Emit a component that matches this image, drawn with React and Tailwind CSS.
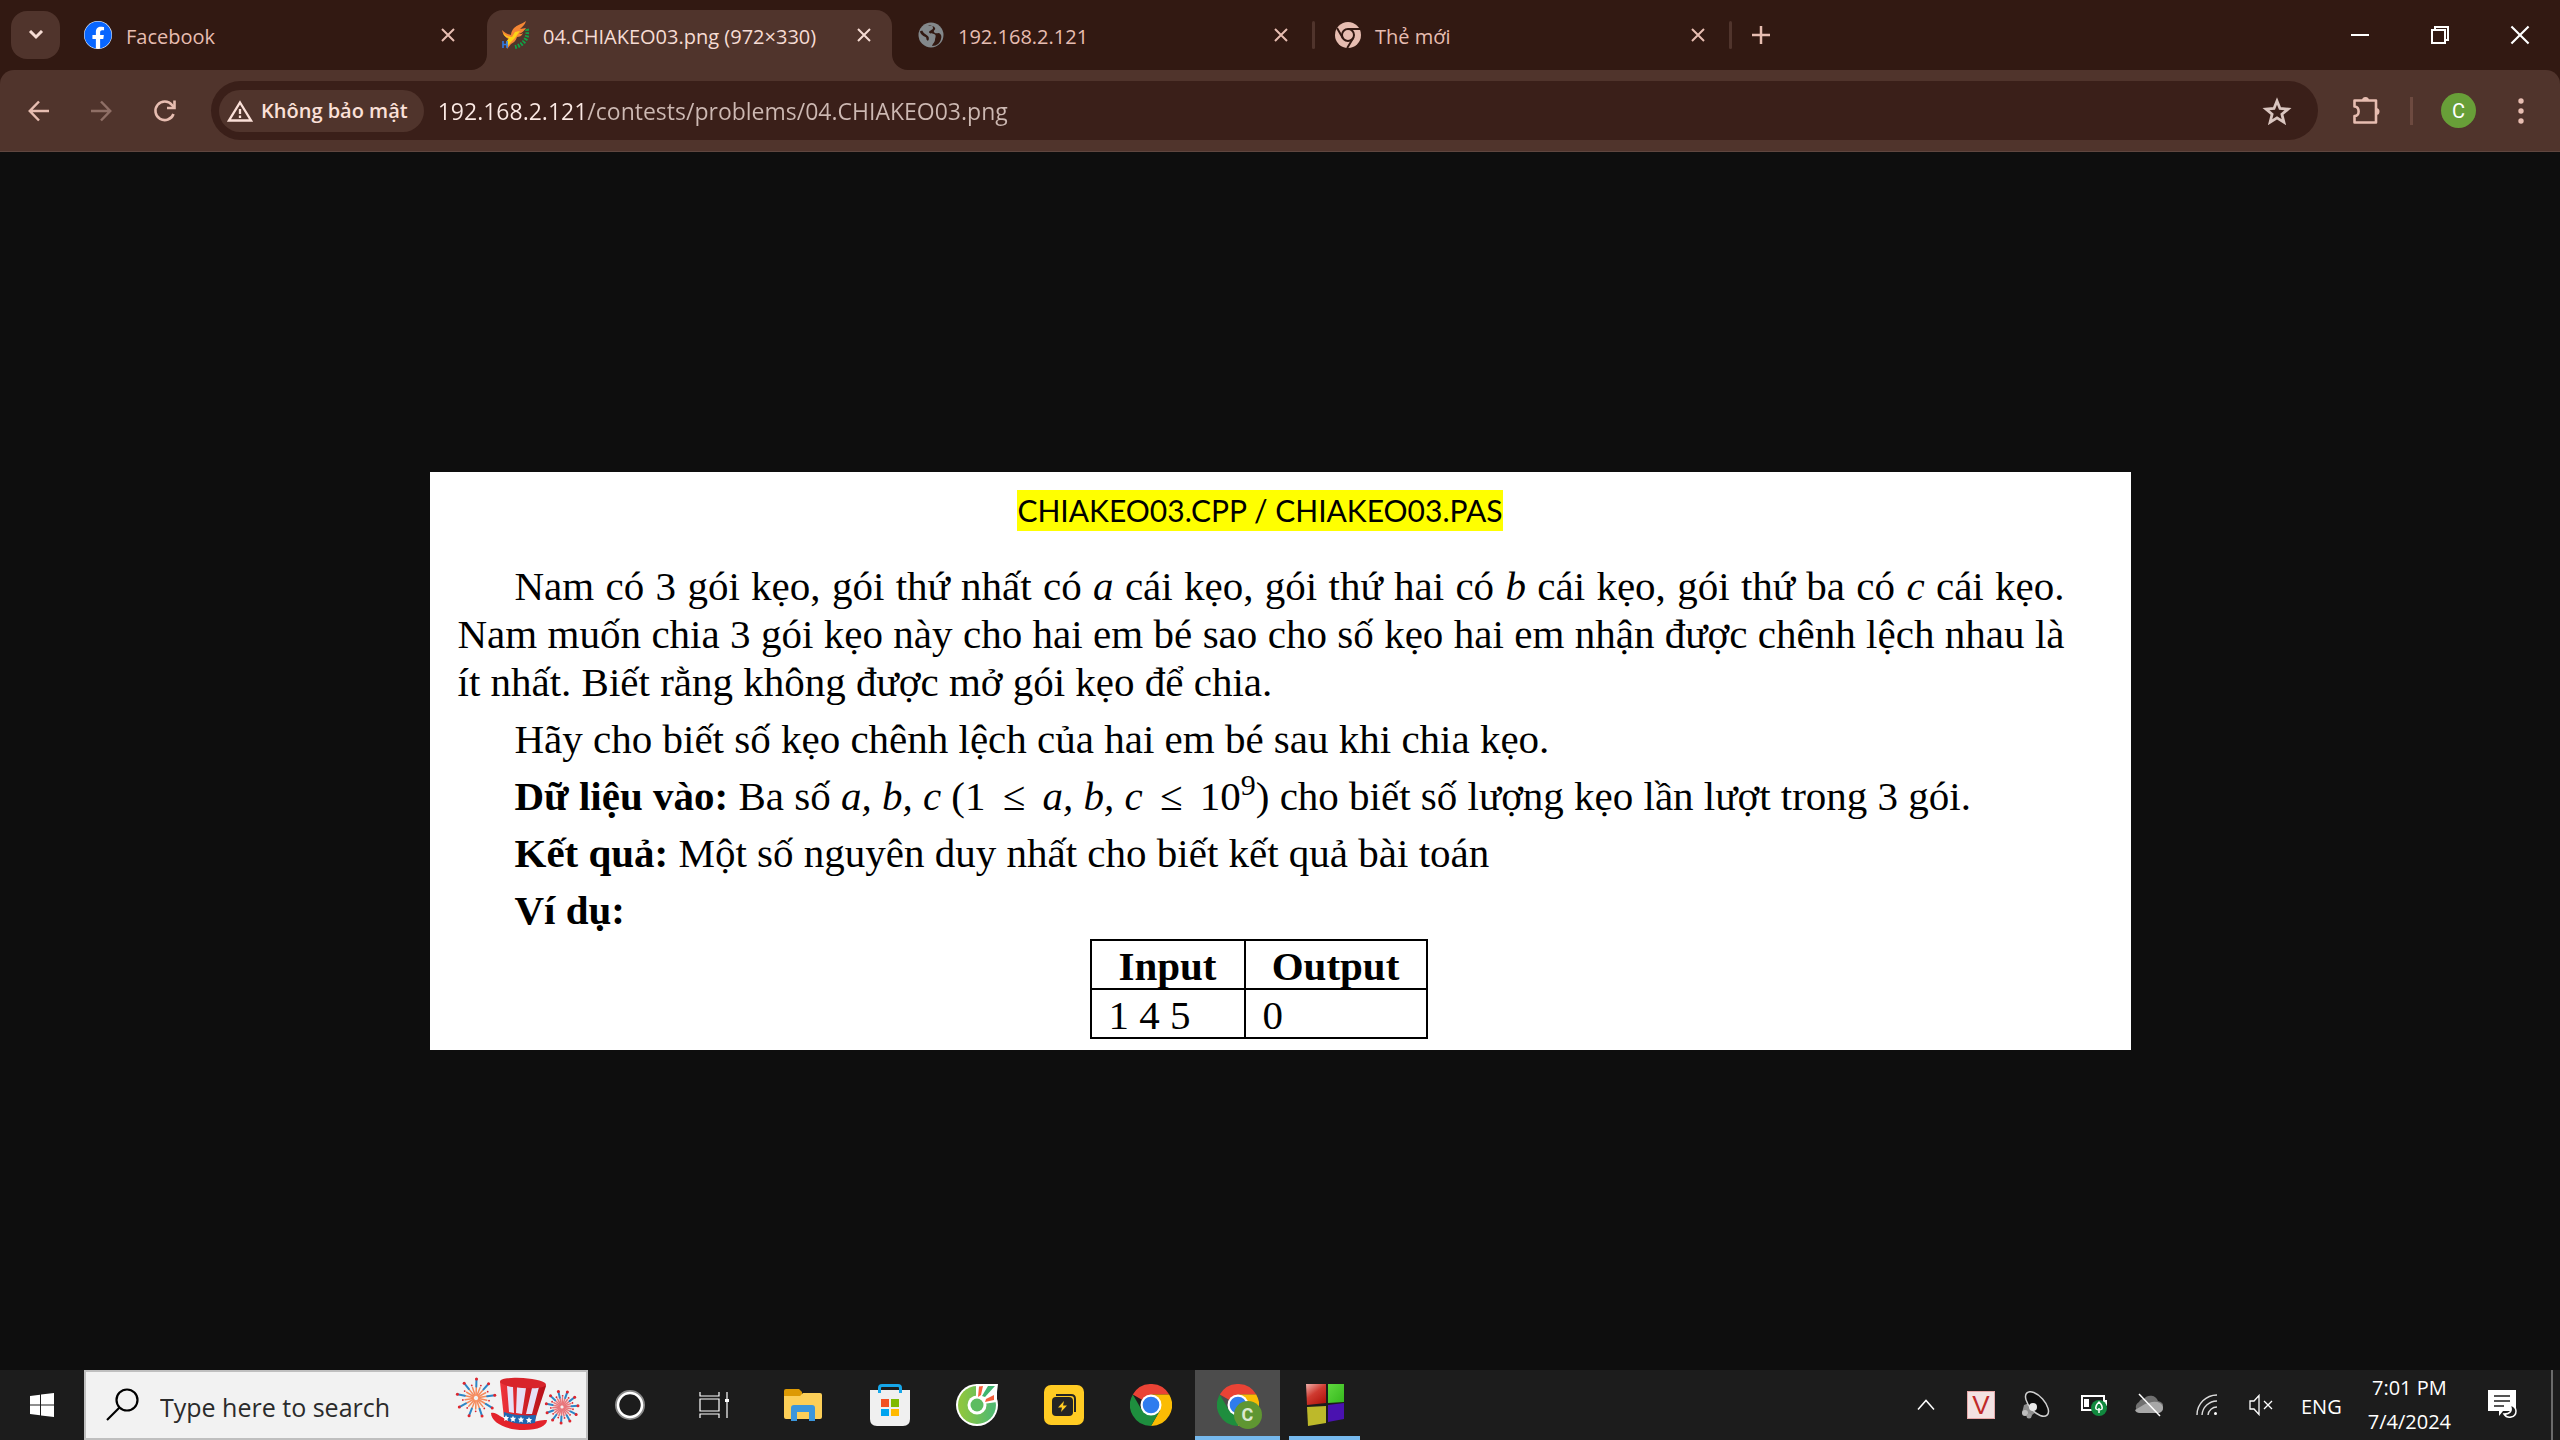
import React from 'react';
import { FaFacebook } from 'react-icons/fa';

const seg = "font-['Open_Sans','Noto_Sans',sans-serif]";

function Cross({ s = 14, w = 2 }) {
  return (
    <svg width={s} height={s} viewBox="0 0 14 14" fill="none" stroke="currentColor" strokeWidth={w}>
      <path d="M1 1l12 12M13 1L1 13" />
    </svg>
  );
}

function Phoenix() {
  return (
    <svg width="28" height="28" viewBox="0 0 28 28">
      <path d="M25 0c-1 4-4 6-6 8l6-1c-2 3-4 5-7 6 2 0 3 0 4-1-1 3-4 4-6 4-1 4-4 6-6 7l-4 5-1-6 3-4C5 17 2 14 1 9c3 3 5 4 9 5 0-2 1-5 3-7 3-3 8-4 12-7z" fill="#f58634" />
      <path d="M2 12c3 3 6 4 9 4l3-5 5-1-5 7-5 5-3 4-1-5 3-4c-3-1-5-2-6-5z" fill="#fcd317" />
      <path d="M26 8c2 8-3 16-12 18" fill="none" stroke="#12a046" strokeWidth="4" strokeDasharray="1.800 1.400" />
      <path d="M2 20v7M6 20v7M2 23.500h4" stroke="#2f7be8" strokeWidth="1.600" />
    </svg>
  );
}

function GlobeIcon() {
  return (
    <svg width="26" height="26" viewBox="0 0 26 26">
      <circle cx="13" cy="13" r="12.500" fill="#83888b" />
      <path d="M10 4c3-1 5 0 5 2s-3 2-4 4c0 2 3 1 5 2 3 1 1 4 1 6s-2 3-3 6c5 0 8-3 9-7 1-3 0-5-2-6-2 0-4 1-5-1s2-2 1-4-3-2-5-2z" fill="#321912" />
      <path d="M3 9c1 3 3 4 5 5s2 3 1 4" fill="none" stroke="#321912" strokeWidth="2.500" />
    </svg>
  );
}

function ChromeMono() {
  return (
    <svg width="26" height="26" viewBox="0 0 26 26">
      <circle cx="13" cy="13" r="13" fill="#e7bdb1" />
      <circle cx="13" cy="13" r="6" fill="none" stroke="#321912" strokeWidth="2" />
      <path d="M13 7h12M7.800 16L2 6M18.200 16l-6 10" stroke="#321912" strokeWidth="2" />
    </svg>
  );
}

function Chrome() {
  return (
    <svg width="42" height="42" viewBox="0 0 48 48">
      <path d="M24 24L3.200 12A24 24 0 0 1 44.800 12H24z" fill="#ea4335" />
      <path d="M24 12h20.800A24 24 0 0 1 24 48l10.400-18z" fill="#fbbc04" />
      <path d="M3.200 12A24 24 0 0 0 24 48l10.400-18H13.600z" fill="#1e8e3e" />
      <circle cx="24" cy="24" r="12" fill="#fff" />
      <circle cx="24" cy="24" r="9.500" fill="#2f7cee" />
    </svg>
  );
}

function Burst({ cx, cy, r, n, a = '#f58a5c', b = '#2c86c7' }) {
  const items = [];
  for (let i = 0; i < n; i++) {
    const t = (i * 2 * Math.PI) / n + 0.2;
    const c = Math.cos(t);
    const s = Math.sin(t);
    const l = i % 2 ? r : r * 0.7;
    items.push(
      <g key={i}>
        <path d={`M${cx + c * r * 0.15} ${cy + s * r * 0.15}L${cx + c * r * 0.58} ${cy + s * r * 0.58}`} stroke={a} strokeWidth="1.500" />
        {i % 2 === 1 && <path d={`M${cx + c * r * 0.6} ${cy + s * r * 0.6}L${cx + c * l} ${cy + s * l}`} stroke={b} strokeWidth="2" />}
        <circle cx={cx + c * l} cy={cy + s * l} r={i % 2 ? 1.5 : 0.9} fill="#e0252d" />
      </g>
    );
  }
  return <g strokeLinecap="round">{items}</g>;
}

function HatArt() {
  return (
    <svg width="126" height="64" viewBox="0 0 126 64">
      <defs>
        <linearGradient id="hat" x1="0" x2="1">
          <stop offset="0" stopColor="#f0343b" />
          <stop offset="1" stopColor="#b51018" />
        </linearGradient>
      </defs>
      <Burst cx={21} cy={25} r={19} n={18} />
      <Burst cx={107} cy={34} r={16} n={22} a="#e8777c" />
      <path d="M36 40c0 9 14 17 33 17 14 0 23-4 23-10-3 0-6 0-9 1-11 3-28 1-38-5-3-2-6-4-9-3z" fill="#e3232b" />
      <path d="M45 9c0-4 46-2 46 4L80 47c-8 4-24 2-31-2z" fill="url(#hat)" />
      <path d="M52 13l6 1 1 26-5-1zM62 14l9 1-4 26-6-1zM77 15l7-1-7 27h-6z" fill="#e6e0f6" />
      <ellipse cx="68" cy="10" rx="23" ry="5" transform="rotate(4 68 10)" fill="#d8242b" />
      <path d="M49 39c9 3 20 4 32 3l-1 8c-10 2-23 1-31-4z" fill="#1f67b1" />
      {[51, 58, 66, 74].map((x, i) => (
        <path key={x} d={`M${x} ${42 + i * 0.7}l1 2h2l-1.500 2 .5 2-2-1-2 1 .5-2-1.500-2h2z`} fill="#fff" />
      ))}
    </svg>
  );
}

function Tab({ icon, title, active, width, sep }) {
  return (
    <div className={`${width} relative flex items-center ${active ? 'h-[60px] self-end rounded-t-[16px] bg-[#50342c] pb-[10px] text-[#f6dcd4]' : 'h-[70px] text-[#e7bdb1]'}`}>
      {active && (
        <>
          <svg className="absolute bottom-0 -left-4" width="16" height="16"><path d="M16 0v16H0A16 16 0 0 0 16 0z" fill="#50342c" /></svg>
          <svg className="absolute -right-4 bottom-0" width="16" height="16"><path d="M0 0v16h16A16 16 0 0 1 0 0z" fill="#50342c" /></svg>
        </>
      )}
      <a href="#tab" className="flex min-w-0 flex-1 items-center gap-[14px] pl-[14px] text-[20px] leading-7 whitespace-nowrap">
        {icon}
        <span className="pt-[3px]">{title}</span>
      </a>
      <button aria-label="Close tab" className={sep ? 'mr-6' : 'mr-[21px]'}><Cross /></button>
      {sep && <span className="h-7 w-[3px] rounded bg-[#50342c]" />}
    </div>
  );
}

const V = ({ children }) => <i className="font-['Liberation_Serif',serif]">{children}</i>;
const Leq = () => <span className="mx-[7px]">≤</span>;

function Task({ children, active, running, label }) {
  return (
    <button aria-label={label} className="relative flex h-[70px] w-[87px] items-center justify-center">
      {active && <span className="absolute inset-x-px inset-y-0 border-b-4 border-[#76b9ed] bg-[#4c4c4c]" />}
      {running && <span className="absolute inset-x-2 bottom-0 h-1 bg-[#76b9ed]" />}
      <span className="relative">{children}</span>
    </button>
  );
}

export default function App() {
  return (
    <div className={`flex min-h-screen flex-col bg-[#0e0e0e] ${seg}`}>
      <header className="bg-[#321912]">
        <div className="flex h-[70px] items-center">
          <button aria-label="Search tabs" className="ml-[11px] flex h-12 w-[49px] items-center justify-center rounded-[16px] bg-[#50342c] text-[#f6dcd4]">
            <svg width="16" height="10" viewBox="0 0 16 10" fill="none" stroke="currentColor" strokeWidth="3"><path d="M2 1l6 6 6-6" /></svg>
          </button>
          <Tab width="ml-[10px] w-[406px]" title="Facebook" icon={<span className="rounded-full bg-white"><FaFacebook size={28} color="#0866ff" /></span>} />
          <Tab width="ml-[11px] w-[405px]" active title="04.CHIAKEO03.png (972×330)" icon={<Phoenix />} />
          <Tab width="ml-[12px] w-[411px]" sep title="192.168.2.121" icon={<GlobeIcon />} />
          <Tab width="ml-[6px] w-[411px]" sep title="Thẻ mới" icon={<ChromeMono />} />
          <button aria-label="New tab" className="ml-5 text-[#e7bdb1]">
            <svg width="18" height="18" viewBox="0 0 18 18" stroke="currentColor" strokeWidth="2.500"><path d="M9 0v18M0 9h18" /></svg>
          </button>
          <div className="ml-auto flex text-white">
            <button aria-label="Minimize" className="flex h-[70px] w-20 items-center justify-center"><span className="h-[2px] w-[18px] bg-white" /></button>
            <button aria-label="Restore" className="flex h-[70px] w-20 items-center justify-center">
              <svg width="18" height="18" viewBox="0 0 18 18" fill="none" stroke="currentColor" strokeWidth="2"><path d="M1 4h13v13H1zM4 4V1h13v13h-3" /></svg>
            </button>
            <button aria-label="Close" className="flex h-[70px] w-20 items-center justify-center"><Cross s={20} w={1.5} /></button>
          </div>
        </div>
        <div className="flex h-[82px] items-center rounded-t-[14px] border-b border-[#5f463f] bg-[#50342c] pr-[36px] pl-[28px] text-[#e7bdb1]">
          <button aria-label="Back">
            <svg width="22" height="22" viewBox="0 0 22 22" fill="none" stroke="currentColor" strokeWidth="2.500"><path d="M21 11H2M11 1.500L1.800 11l9.200 9.500" /></svg>
          </button>
          <button aria-label="Forward" className="ml-10 text-[#8f6f66]">
            <svg width="22" height="22" viewBox="0 0 22 22" fill="none" stroke="currentColor" strokeWidth="2.500"><path d="M1 11h19M11 1.500l9.200 9.500-9.200 9.500" /></svg>
          </button>
          <button aria-label="Reload" className="ml-10">
            <svg width="24" height="24" viewBox="0 0 24 24" fill="none" stroke="currentColor" strokeWidth="2.600"><path d="M21.500 15A9.300 9.300 0 1 1 20 6l2 2.500" /><path d="M22.500 1.500v7.500H15" /></svg>
          </button>
          <div className="ml-[35px] flex h-[59px] flex-1 items-center rounded-full bg-[#3a1f19] pr-[26px] pl-2">
            <button className="flex h-[42px] shrink-0 items-center gap-2 rounded-full bg-[#50342c] px-2 pr-4 text-[20px] leading-7 font-semibold text-[#fbe0d8]">
              <svg width="26" height="22" viewBox="0 0 26 22" fill="none" stroke="currentColor" strokeWidth="2.300"><path d="M13 2.500L24 20.500H2z" /><path d="M13 9v5M13 15.500V18" /></svg>
              Không bảo mật
            </button>
            <input
              aria-label="Address"
              defaultValue="192.168.2.121/contests/problems/04.CHIAKEO03.png"
              className="ml-[14px] min-w-0 flex-1 bg-linear-to-r from-[#fbe9e4] from-[147px] to-[#cdb9b3] to-[147px] bg-clip-text text-[23px] leading-8 text-transparent outline-none"
            />
            <button aria-label="Bookmark" className="text-[#d9c5bf]">
              <svg width="30" height="28" viewBox="0 0 30 28" fill="none" stroke="currentColor" strokeWidth="2.800"><path d="M15 4l3 7.500 8 .6-6.100 5.200 2 7.900L15 20.900l-6.900 4.300 2-7.900L4 12.100l8-.6z" /></svg>
            </button>
          </div>
          <button aria-label="Extensions" className="ml-[34px]">
            <svg width="30" height="30" viewBox="0 1 30 30" fill="none" stroke="currentColor" strokeWidth="2.600"><path d="M2.500 5.500h21.500v22H2.500V21c5.500 0 5.500-9 0-9.500z" strokeLinejoin="round" /><path d="M10 5.500a3.500 3.500 0 0 1 7 0zM24 13a3.500 3.500 0 0 1 0 7z" fill="currentColor" stroke="none" /></svg>
          </button>
          <span className="ml-7 h-7 w-[3px] bg-[#6d4a40]" />
          <button className="ml-7 flex h-[35px] w-[35px] items-center justify-center rounded-full bg-[#689f38] font-['Roboto',sans-serif] text-[20px] text-white">C</button>
          <button aria-label="Menu" className="ml-[42px]">
            <svg width="6" height="26" viewBox="0 0 6 26" fill="currentColor"><circle cx="3" cy="3" r="2.700" /><circle cx="3" cy="13" r="2.700" /><circle cx="3" cy="23" r="2.700" /></svg>
          </button>
        </div>
      </header>

      <main className="flex flex-1 items-center justify-center">
        <article className="w-full max-w-[1701px] bg-white px-7 pt-[18px] pb-[11px] font-['Liberation_Serif',serif] text-[41px] leading-[48px] text-black">
          <h1 className="mr-10 text-center font-['Lato',sans-serif] text-[30px] leading-[41px]"><mark className="inline-block bg-[#ffff00] text-black">CHIAKEO03.CPP / CHIAKEO03.PAS</mark></h1>
          <div className="mt-[31px] mr-[38px] flex flex-col gap-[9px] indent-[57px]">
            <p className="text-justify">
              Nam có 3 gói kẹo, gói thứ nhất có <V>a</V> cái kẹo, gói thứ hai có <V>b</V> cái kẹo, gói thứ ba có <V>c</V> cái kẹo. Nam muốn chia 3 gói kẹo này cho hai em bé sao cho số kẹo hai em nhận được chênh lệch nhau là ít nhất. Biết rằng không được mở gói kẹo để chia.
            </p>
            <p>Hãy cho biết số kẹo chênh lệch của hai em bé sau khi chia kẹo.</p>
            <p><b>Dữ liệu vào:</b> Ba số <V>a, b, c</V> (1 <Leq /> <V>a, b, c</V> <Leq /> 10<sup className="text-[30px] leading-none">9</sup>) cho biết số lượng kẹo lần lượt trong 3 gói.</p>
            <p><b>Kết quả:</b> Một số nguyên duy nhất cho biết kết quả bài toán</p>
            <p><b>Ví dụ:</b></p>
          </div>
          <table className="mt-[5px] ml-[632px] border-collapse">
            <thead><tr><th className="h-[49px] w-[154px] border-2 border-black p-0 pt-1 leading-[43px]">Input</th><th className="w-[182px] border-2 border-black p-0 pt-1 leading-[43px]">Output</th></tr></thead>
            <tbody><tr><td className="h-[49px] border-2 border-black p-0 pt-1 pl-[17px] leading-[43px]">1 4 5</td><td className="border-2 border-black p-0 pt-1 pl-[17px] leading-[43px]">0</td></tr></tbody>
          </table>
        </article>
      </main>

      <footer className="flex h-[70px] items-center bg-[#1c1c1c] text-white">
        <button aria-label="Start" className="flex h-[70px] w-[84px] items-center justify-center">
          <svg width="24" height="24" viewBox="0 0 24 24" fill="#fff"><path d="M0 3l10-1.300V11.500H0zM11 1.500L24 0v11.500H11zM0 12.500h10v9.800L0 21zM11 12.500h13V24l-13-1.500z" /></svg>
        </button>
        <label className="flex h-[70px] w-[504px] items-center border-2 border-[#bfbfbf] bg-[#f2f2f2] pl-5">
          <svg width="34" height="34" viewBox="0 0 34 34" fill="none" stroke="#000" strokeWidth="2.200"><circle cx="21" cy="12" r="10.500" /><path d="M13.500 19.500L1 32" /></svg>
          <input aria-label="Search" placeholder="Type here to search" className="mt-[3px] ml-5 w-[295px] bg-transparent text-[25px] leading-8 placeholder:text-[#2b2b2b]" />
          <HatArt />
        </label>
        <button aria-label="Cortana" className="flex h-[70px] w-[84px] items-center justify-center">
          <svg width="30" height="30" viewBox="0 0 30 30" fill="none"><circle cx="15" cy="15" r="13" stroke="#8a8a8a" strokeWidth="4" /><circle cx="15" cy="15" r="12" stroke="#fff" strokeWidth="2.500" /></svg>
        </button>
        <button aria-label="Task view" className="mr-[3px] flex h-[70px] w-[84px] items-center justify-center">
          <svg width="30" height="28" viewBox="0 0 30 28" fill="none" stroke="#fff" strokeWidth="1.200"><path d="M1 1v4h19V1M1 27v-4h19v4M1 8h19v12H1zM28 1v26" /><path d="M26 8h4v3h-4z" fill="#fff" stroke="none" /></svg>
        </button>
        <Task label="File Explorer">
          <svg width="38" height="32" viewBox="0 0 38 32"><path d="M0 2q0-2 2-2h13l3 3v4H0z" fill="#dd9a03" /><path d="M0 7h16l3-3h17q2 0 2 2v22q0 2-2 2H2q-2 0-2-2z" fill="#fccf58" /><path d="M7 32V19q0-3 3-3h18q3 0 3 3v13h-6v-9H13v9z" fill="#3a96dd" /></svg>
        </Task>
        <Task label="Store">
          <svg width="40" height="42" viewBox="0 0 40 42"><path d="M9.500 9V4q0-2.500 2.500-2.500h16q2.500 0 2.500 2.500v5" fill="none" stroke="#16a7ea" strokeWidth="3" /><path d="M0 6h40v29q0 7-7 7H7q-7 0-7-7z" fill="#f0f0f0" /><path d="M9.500 9V6M30.500 9V6" stroke="#16a7ea" strokeWidth="3" /><path d="M11 15h8v8h-8z" fill="#f25022" /><path d="M21 15h8v8h-8z" fill="#7fba00" /><path d="M11 25h8v7h-8z" fill="#00a4ef" /><path d="M21 25h8v7h-8z" fill="#ffb900" /></svg>
        </Task>
        <Task label="Coc Coc">
          <svg width="42" height="42" viewBox="0 0 42 42">
            <defs><linearGradient id="cc" x1="0" x2="1"><stop offset="0.100" stopColor="#8dc63f" /><stop offset="0.900" stopColor="#52ba70" /></linearGradient></defs>
            <circle cx="21" cy="21" r="21" fill="#fff" /><path d="M21 0h21l-2 16z" fill="#fff" /><circle cx="21" cy="21" r="19" fill="url(#cc)" />
            <path d="M20 21V0h21v18z" fill="#fff" /><circle cx="21" cy="21" r="9.500" fill="#fff" /><circle cx="21" cy="21" r="6.500" fill="#5cbc60" />
            <path d="M23 2.500l4-.5-2 9-3 2zM38 11v5l-9 2 1-3z" fill="#f4603c" /><path d="M32 2h7L29 13l-3-1z" fill="#3fb570" />
          </svg>
        </Task>
        <Task label="Battery tool">
          <svg width="40" height="40" viewBox="0 0 40 40"><rect width="40" height="40" rx="7" fill="#ffcb23" /><path d="M12 10h15q4 0 4 4v13" fill="none" stroke="#242424" strokeWidth="2" /><rect x="8" y="12" width="21" height="19" rx="4" fill="#242424" /><path d="M20 16l-6 6.500h4L17 27l6-6.500h-4z" fill="#ffcb23" /></svg>
        </Task>
        <Task label="Chrome"><Chrome /></Task>
        <Task label="Chrome, profile C" active>
          <Chrome />
          <span className="absolute -right-[3px] -bottom-[3px] flex h-7 w-7 items-center justify-center rounded-full bg-[#5f9632] font-['Roboto',sans-serif] text-[18px] leading-none font-bold text-[#dce8d0]">C</span>
        </Task>
        <Task label="Code::Blocks" running>
          <svg width="38" height="42" viewBox="0 0 38 42">
            <defs>
              <linearGradient id="cr" x1="0" y1="0" x2="0.700" y2="1"><stop offset="0" stopColor="#efb0aa" /><stop offset="0.500" stopColor="#cf3a30" /><stop offset="1" stopColor="#b3170f" /></linearGradient>
              <linearGradient id="cg" x1="0" y1="0" x2="1" y2="1"><stop offset="0" stopColor="#5fd83f" /><stop offset="1" stopColor="#35b81c" /></linearGradient>
            </defs>
            <path d="M0 0h20v19L1 21z" fill="url(#cr)" /><path d="M22 0h16v18l-16 1z" fill="url(#cg)" /><path d="M1 23l19-1v17L2 42z" fill="#bdb92a" /><path d="M22 21l16-2v16l-16 3z" fill="#4a12b0" />
          </svg>
        </Task>

        <div className="ml-auto flex items-center">
          <svg width="18" height="12" viewBox="0 0 18 12" fill="none" stroke="#fff" strokeWidth="1.500"><path d="M1 10.500l8-9 8 9" /></svg>
          <span className="ml-8 flex h-7 w-7 items-center justify-center border border-[#e6a8a8] bg-[#f3e2e2] font-['Liberation_Sans',sans-serif] text-[26px] leading-none text-[#c02a2a]">V</span>
          <svg className="ml-[26px]" width="30" height="28" viewBox="0 0 30 28">
            <path d="M3 14l8-3 7 9-6 3-3 4-8-5z" fill="#8d8d8d" />
            <ellipse cx="16" cy="13" rx="7.500" ry="15" transform="rotate(-42 16 13)" fill="#0c0c0c" stroke="#cfcfcf" strokeWidth="1.500" />
            <circle cx="12" cy="16" r="4" fill="#e8e8e8" /><circle cx="4" cy="22" r="3" fill="#bdbdbd" /><circle cx="8" cy="25" r="2.500" fill="#9c9c9c" />
          </svg>
          <svg className="ml-[30px]" width="27" height="22" viewBox="0 0 27 22"><path d="M1 2h22v14H1z" fill="none" stroke="#fff" strokeWidth="2" /><path d="M3 5h5v8H3zM24 6h2v6h-2z" fill="#fff" /><circle cx="18" cy="14" r="8" fill="#10893e" /><path d="M18 19v-5m-3 1c-1-3 1-5 3-7 2 2 4 4 3 7q-3 2-6 0" fill="none" stroke="#fff" strokeWidth="1.500" /></svg>
          <svg className="ml-[26px]" width="29" height="24" viewBox="0 0 29 24"><path d="M6 20a6 6 0 0 1-1-11 5 5 0 0 1 5-3 8 8 0 0 1 14 2 6 6 0 0 1-1 12z" fill="#707070" /><path d="M1 17l10-6 7-2q9-1 11 5c0 4-2 6-6 6H6q-4 0-5-3z" fill="#a8a8a8" /><path d="M5 1l21 22" stroke="#fff" strokeWidth="1.500" /></svg>
          <svg className="ml-[33px]" width="22" height="22" viewBox="0 0 22 22" fill="none" stroke="#ddd" strokeWidth="1.400"><path d="M1 21A20 20 0 0 1 21 1M6 21A15 15 0 0 1 21 7M12 21a9 9 0 0 1 9-8" /><circle cx="19.500" cy="19.500" r="1.500" fill="#fff" stroke="none" /></svg>
          <svg className="ml-[31px]" width="24" height="22" viewBox="0 0 24 22" fill="none" stroke="#fff" strokeWidth="1.300"><path d="M1 7h4l5-5.500v19L5 15H1zM15 7l8 8M23 7l-8 8" /></svg>
          <span className="mt-[3px] ml-7 text-[20px] leading-8">ENG</span>
          <div className="ml-[26px] text-center text-[20px] leading-[34px] whitespace-nowrap"><div>7:01 PM</div><div>7/4/2024</div></div>
          <button aria-label="Notifications" className="ml-[37px]">
            <svg width="30" height="30" viewBox="0 0 30 30"><path d="M0 0h28v21H15l-4 5v-5H0z" fill="#fff" /><path d="M6 6h16M6 11h16M6 16h10" stroke="#1c1c1c" strokeWidth="1.500" /><path d="M22 15c3 6 0 9-6 9 3 5 12 4 12-3 0-3-2-5-6-6z" fill="#1c1c1c" stroke="#fff" strokeWidth="1.500" /></svg>
          </button>
          <span className="mr-[7px] ml-[33px] h-[70px] w-[2px] bg-[#6b6b6b]" />
        </div>
      </footer>
    </div>
  );
}
